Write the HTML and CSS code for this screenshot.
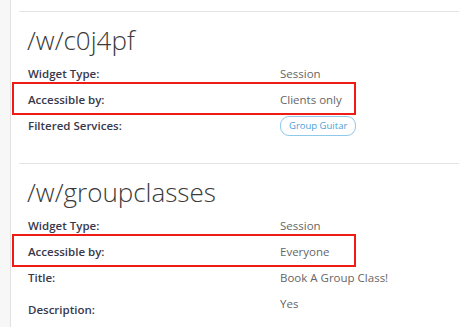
FILE: index.html
```html
<!DOCTYPE html>
<html lang="en">
<head>
  <meta charset="UTF-8">
  <title>Widgets</title>
  <link rel="stylesheet" href="styles.css">
</head>
<body>
  <div class="panel">
    <div class="widget">
      <h2>/w/c0j4pf</h2>
      <div class="row">
        <div class="label">Widget Type:</div>
        <div class="value">Session</div>
      </div>
      <div class="row marked">
        <div class="label">Accessible by:</div>
        <div class="value">Clients only</div>
      </div>
      <div class="row">
        <div class="label">Filtered Services:</div>
        <div class="value"><span class="tag">Group Guitar</span></div>
      </div>
    </div>

    <div class="widget">
      <h2>/w/groupclasses</h2>
      <div class="row">
        <div class="label">Widget Type:</div>
        <div class="value">Session</div>
      </div>
      <div class="row marked">
        <div class="label">Accessible by:</div>
        <div class="value">Everyone</div>
      </div>
      <div class="row">
        <div class="label">Title:</div>
        <div class="value">Book A Group Class!</div>
      </div>
      <div class="row tall">
        <div class="label">Description:</div>
        <div class="value">Yes</div>
      </div>
    </div>
  </div>
</body>
</html>
```

FILE: styles.css
```css
body {
  margin: 0;
  background-color: #f7f7f7;
  font-family: 'Open Sans', 'Liberation Sans', sans-serif;
  color: #333;
  overflow: hidden;
}
.panel {
  margin-left: 10px;
  padding: 11px 0 0 8px;
  border-left: 1px solid #e2e2e2;
  background-color: #fff;
  min-height: 100vh;
  box-sizing: border-box;
}
.widget {
  border-top: 1px solid #e4e4e4;
  padding: 12px 0 24px 9px;
}
.widget h2 {
  margin: 0 0 5px -1px;
  font-size: 26px;
  font-weight: 300;
  line-height: 32px;
  color: #3a3a3a;
}
.row {
  display: grid;
  grid-template-columns: 252px 1fr;
  align-items: center;
  height: 26px;
}
.row.marked {
  position: relative;
}
/* red annotation box drawn over the row */
.row.marked::after {
  content: "";
  position: absolute;
  left: -16px;
  top: -5px;
  width: 344px;
  height: 33px;
  border: 2px solid #ee1c14;
  box-sizing: border-box;
}
.row.tall {
  height: 34px;
  align-items: start;
}
.row.tall .label {
  padding-top: 11px;
}
.row.tall .value {
  padding-top: 5px;
}
.label {
  font-size: 11.5px;
  font-weight: 600;
  line-height: 16px;
  color: #38384c;
}
.value {
  font-size: 11.5px;
  line-height: 16px;
  color: #666;
}
.tag {
  display: inline-block;
  padding: 2px 8px 3px;
  border: 1px solid #8ec9ec;
  border-radius: 9px;
  font-size: 9.5px;
  line-height: 13px;
  color: #4a9fd8;
}
```
